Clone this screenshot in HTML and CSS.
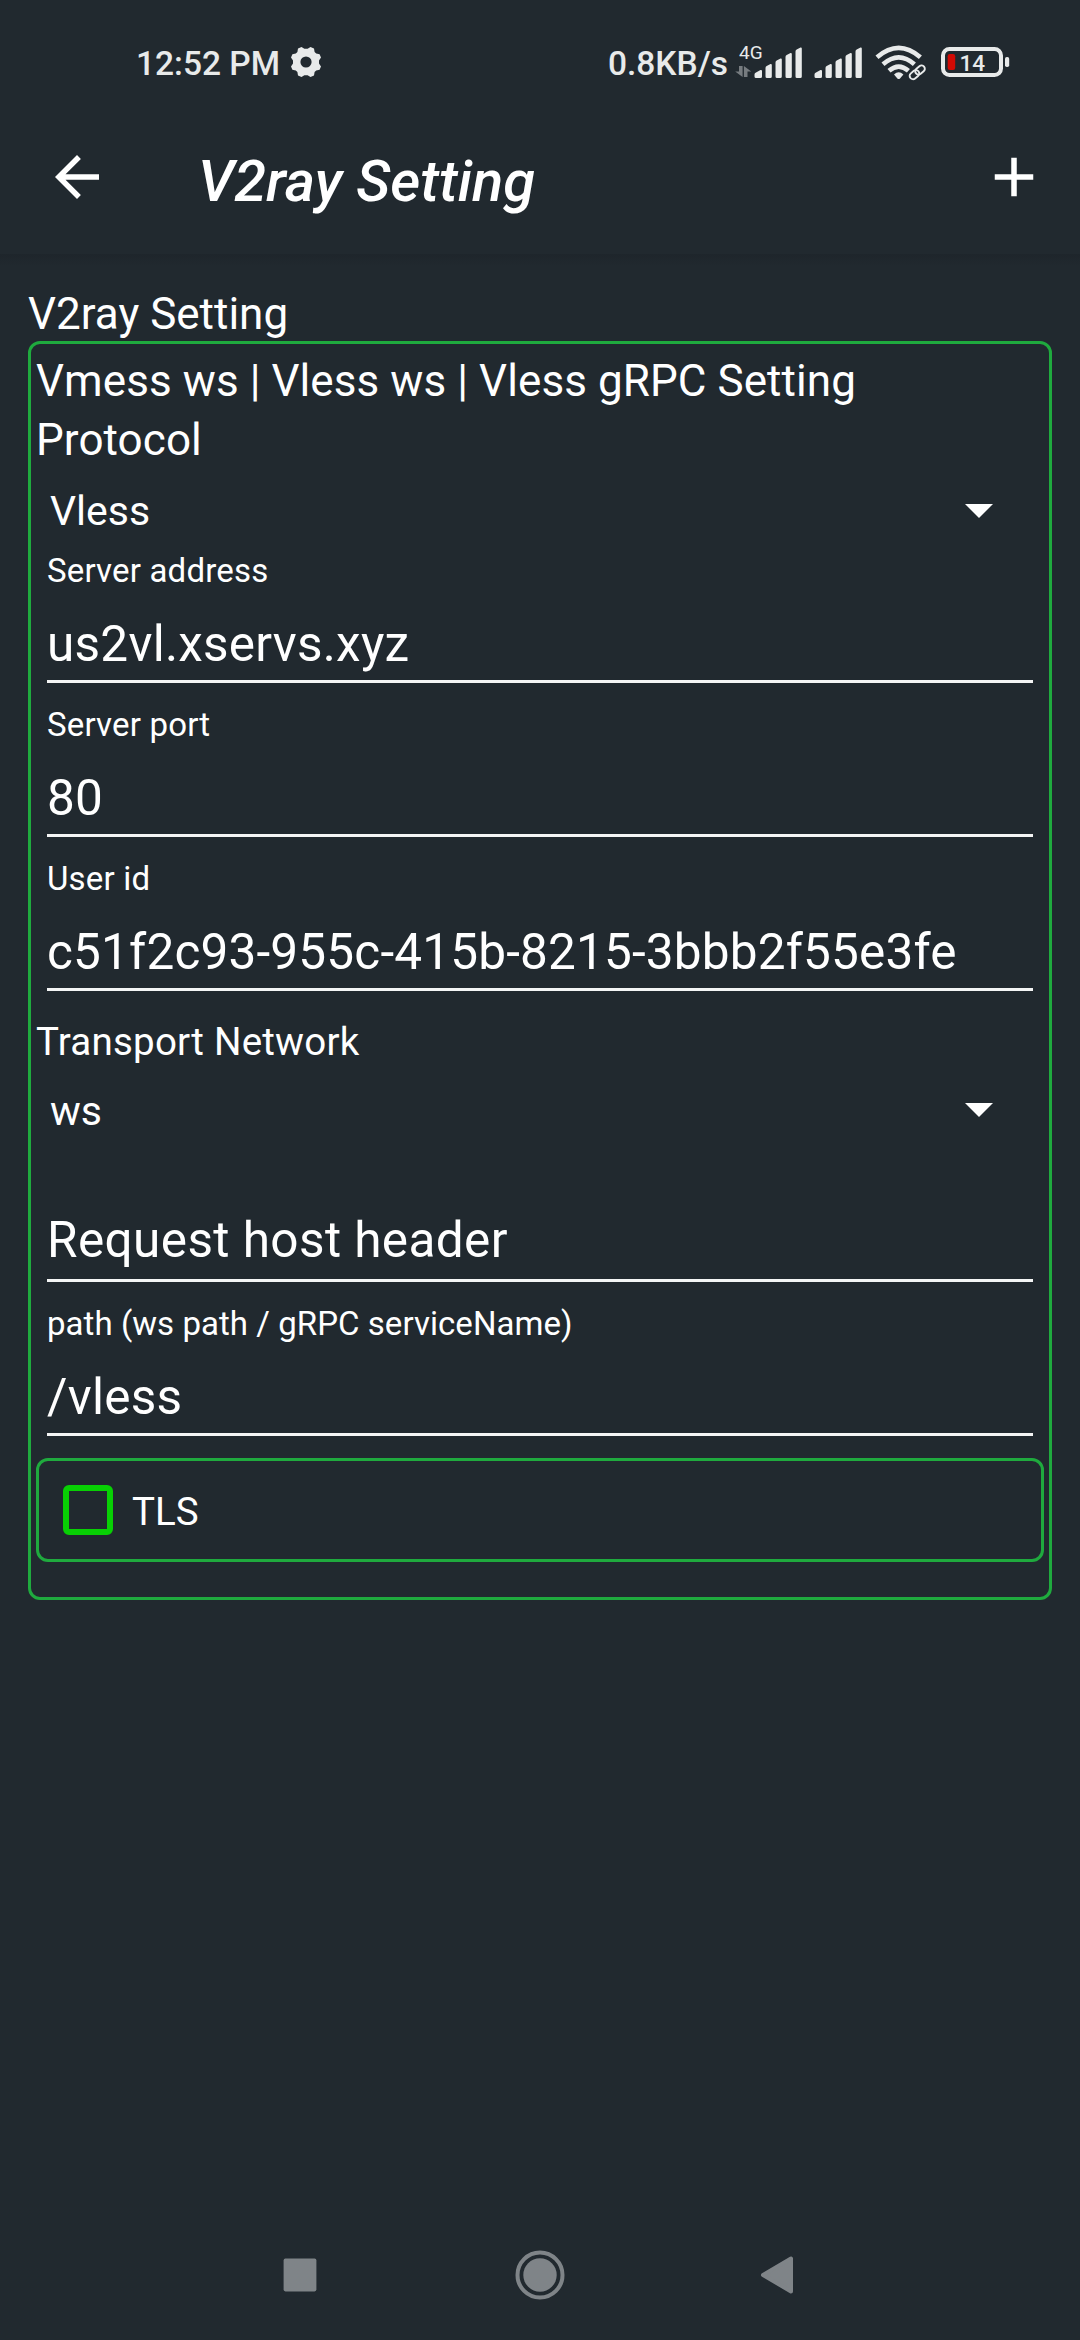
FILE: index.html
```html
<!DOCTYPE html>
<html lang="en">
<head>
<meta charset="utf-8">
<title>V2ray Setting</title>
<link rel="stylesheet" href="styles.css">
</head>
<body>
<div class="screen">
  <div class="status">
    <span class="clock">12:52 PM</span>
    <svg class="gear" width="32" height="32" viewBox="-16 -16 32 32" fill="#e8eaea">
      <path fill-rule="evenodd" d="M-4.500-15 L-1.600-13.200 H1.600 L4.500-15 L8-13.400 L8.600-10 L10.200-8.400 L13.600-7.800 L15-4.400 L13-1.500 V1.500 L15 4.400 L13.600 7.800 L10.200 8.400 L8.600 10 L8 13.400 L4.500 15 L1.600 13.200 H-1.600 L-4.500 15 L-8 13.400 L-8.600 10 L-10.200 8.400 L-13.600 7.800 L-15 4.400 L-13 1.500 V-1.500 L-15-4.400 L-13.600-7.800 L-10.200-8.400 L-8.600-10 L-8-13.400Z M0-5.600 A5.600 5.600 0 1 0 0 5.600 A5.600 5.600 0 1 0 0-5.600Z"/>
    </svg>
    <span class="speed">0.8KB/s</span>
    <svg class="indicators" width="280" height="126" viewBox="732 0 280 126" fill="#e8eaea">
      <text class="network" x="739" y="59">4G</text>
      <g fill="#777c80">
        <path d="M739 66h3.600v11l-7.400-5.600h3.800z"/>
        <path d="M747.500 77h-3.600V66l7.400 5.600h-3.800z"/>
      </g>
      <g id="bars">
        <path d="M754.500 74.500q0-1.500 1.500-2l4.500-2.500q1.500-.3 1.500 1v5.500q0 1.500-1.500 1.500h-4.500q-1.500 0-1.500-1.500z"/>
        <path d="M765.500 68q0-1.500 1.200-2l3.800-1.900q1.300-.3 1.300 1v11.400q0 1.500-1.500 1.500h-3.300q-1.500 0-1.500-1.500z"/>
        <path d="M775.500 62.500q0-1.500 1.200-2l3.800-1.900q1.300-.3 1.300 1v16.900q0 1.500-1.500 1.500h-3.300q-1.500 0-1.500-1.500z"/>
        <path d="M785.500 57q0-1.500 1.200-2l3.800-1.900q1.300-.3 1.300 1v22.400q0 1.500-1.500 1.500h-3.300q-1.500 0-1.500-1.500z"/>
        <path d="M795.500 51.500q0-1.500 1.200-2l3.800-1.900q1.300-.3 1.300 1v27.900q0 1.500-1.500 1.500h-3.300q-1.500 0-1.500-1.500z"/>
      </g>
      <use href="#bars" x="60"/>
      <g fill="none" stroke="#e8eaea" stroke-width="4.600">
        <path d="M877 57.300Q898.700 38.500 920.400 57.300"/>
        <path d="M883 64.300Q898.700 50.500 914.400 64.300"/>
        <path d="M889 70.800Q898.700 62.300 908.400 70.800"/>
      </g>
      <path d="M894 74.500q4.700-4.500 9.400 0l-3.400 4q-1.300 1-2.600 0z"/>
      <g fill="none" stroke="#21292f" stroke-width="5">
        <rect x="914.800" y="66.800" width="10.500" height="6.600" rx="3.300" transform="rotate(-40 920 70.100)"/>
        <rect x="909.200" y="71.300" width="10.500" height="6.600" rx="3.300" transform="rotate(-40 914.500 74.600)"/>
      </g>
      <g fill="none" stroke="#e8eaea" stroke-width="1.900">
        <rect x="914.800" y="66.800" width="10.500" height="6.600" rx="3.300" transform="rotate(-40 920 70.100)"/>
        <rect x="909.200" y="71.300" width="10.500" height="6.600" rx="3.300" transform="rotate(-40 914.500 74.600)"/>
      </g>
      <rect x="943" y="49" width="58" height="26" rx="6.500" fill="none" stroke="#e8eaea" stroke-width="4"/>
      <rect x="1005" y="57" width="4.200" height="10" rx="1.800"/>
      <rect x="947.700" y="54" width="7.500" height="16" rx="2.200" fill="#d20a04"/>
      <text class="charge" x="959.500" y="71">14</text>
    </svg>
  </div>

  <header class="appbar">
    <svg width="66" height="66" viewBox="0 0 24 24" fill="#fff"><path d="M20 11H7.830l5.590-5.590L12 4l-8 8 8 8 1.410-1.410L7.830 13H20v-2z"/></svg>
    <h1 class="title">V2ray Setting</h1>
    <svg width="66" height="66" viewBox="0 0 24 24" fill="#fff"><path d="M19 13h-6v6h-2v-6H5v-2h6V5h2v6h6v2z"/></svg>
  </header>

  <main class="content">
    <h2 class="section">V2ray Setting</h2>
    <div class="card">
      <div class="heading">Vmess ws | Vless ws | Vless gRPC Setting</div>
      <div class="heading protocol">Protocol</div>
      <div class="spinner">
        <span>Vless</span>
        <svg width="28" height="14" viewBox="0 0 28 14" fill="#fff"><path d="M0 0h28L14 14z"/></svg>
      </div>
      <div class="field"><div class="label">Server address</div><div class="value host">us2vl.xservs.xyz</div></div>
      <div class="field"><div class="label">Server port</div><div class="value">80</div></div>
      <div class="field"><div class="label">User id</div><div class="value">c51f2c93-955c-415b-8215-3bbb2f55e3fe</div></div>
      <div class="transport">Transport Network</div>
      <div class="spinner network-type">
        <span>ws</span>
        <svg width="28" height="14" viewBox="0 0 28 14" fill="#fff"><path d="M0 0h28L14 14z"/></svg>
      </div>
      <div class="field empty"><div class="value">Request host header</div></div>
      <div class="field"><div class="label path">path (ws path / gRPC serviceName)</div><div class="value host">/vless</div></div>
      <div class="tls"><span class="box"></span><span class="tls-name">TLS</span></div>
    </div>
  </main>

  <nav class="navbar">
    <svg width="34" height="34" viewBox="0 0 34 34" fill="#7f8488"><rect x=".6" y=".6" width="32.800" height="32.800" rx="1.800"/></svg>
    <svg width="50" height="50" viewBox="0 0 50 50" fill="#7f8488"><circle cx="25" cy="25" r="22.500" fill="none" stroke="#7f8488" stroke-width="4"/><circle cx="25" cy="25" r="16.700"/></svg>
    <svg width="34" height="40" viewBox="0 0 34 40" fill="#7f8488" stroke="#7f8488" stroke-width="4" stroke-linejoin="round"><path d="M3 20L31 3.500V36.500z"/></svg>
  </nav>
</div>
</body>
</html>
```
FILE: styles.css
```css
* { box-sizing: border-box; }

body {
  margin: 0;
  background: #21292f;
  color: #fff;
  font-family: Roboto, sans-serif;
}

svg { display: block; flex: none; }

.screen {
  width: 1080px;
  height: 2340px;
  display: flex;
  flex-direction: column;
}

.status {
  height: 126px;
  padding: 0 68px 0 136px;
  display: flex;
  align-items: center;
  color: #e8eaea;
  font-size: 33.500px;
  font-weight: 500;
  line-height: 40px;
  white-space: nowrap;
}
.clock, .speed { padding-top: 1px; }
.gear { margin: 0 auto 2px 10px; }
.speed { margin-right: 4px; }
.network { font-size: 19px; font-weight: 400; }
.charge { font-size: 22.500px; font-weight: 500; }

.appbar {
  height: 128px;
  padding: 0 33px 26px 44px;
  display: flex;
  align-items: center;
}
.title {
  flex: 1;
  margin: 0 0 0 88px;
  padding-top: 7px;
  font-size: 57.800px;
  font-weight: 500;
  font-style: italic;
  line-height: 66px;
}

.content {
  flex: 1;
  padding: 33px 28px 0;
  background: linear-gradient(#1e252b, #21292f 12px);
}
.section {
  margin: 0;
  font-size: 44px;
  font-weight: 400;
  line-height: 54px;
}

.card {
  height: 1259px;
  padding: 8px 5px 0;
  border: 3px solid #1faa3e;
  border-radius: 12px;
}
.heading { font-size: 44px; line-height: 58px; letter-spacing: .08px; }
.protocol { line-height: 60px; }

.spinner {
  height: 81px;
  padding: 0 51px 0 14px;
  display: flex;
  align-items: center;
  justify-content: space-between;
  font-size: 41px;
}
.spinner span { padding-top: 1px; }
.network-type { height: 84px; }

.field {
  margin: 0 11px 22px;
  border-bottom: 3px solid #f4f5f5;
}
.label {
  margin-bottom: 23px;
  font-size: 33px;
  line-height: 40px;
  letter-spacing: .18px;
}
.path { letter-spacing: .05px; }
.value {
  padding-bottom: 6px;
  font-size: 49.500px;
  line-height: 60px;
  letter-spacing: .17px;
}
.host { letter-spacing: .25px; }
.empty { padding-top: 58px; }
.empty .value { padding-bottom: 9px; letter-spacing: .4px; }

.transport {
  padding-top: 3px;
  font-size: 38.500px;
  line-height: 52px;
  letter-spacing: .23px;
}

.tls {
  height: 104px;
  padding: 0 24px;
  display: flex;
  align-items: center;
  gap: 19px;
  border: 3px solid #1faa3e;
  border-radius: 12px;
  font-size: 38.500px;
}
.tls-name { padding-top: 2px; }
.box {
  width: 50px;
  height: 50px;
  border: 6px solid #08d004;
  border-radius: 6px;
}

.navbar {
  height: 130px;
  padding: 0 286px 0 283px;
  display: flex;
  align-items: center;
  justify-content: space-between;
}
.navbar svg:nth-child(2) { margin-left: 2px; }
```
